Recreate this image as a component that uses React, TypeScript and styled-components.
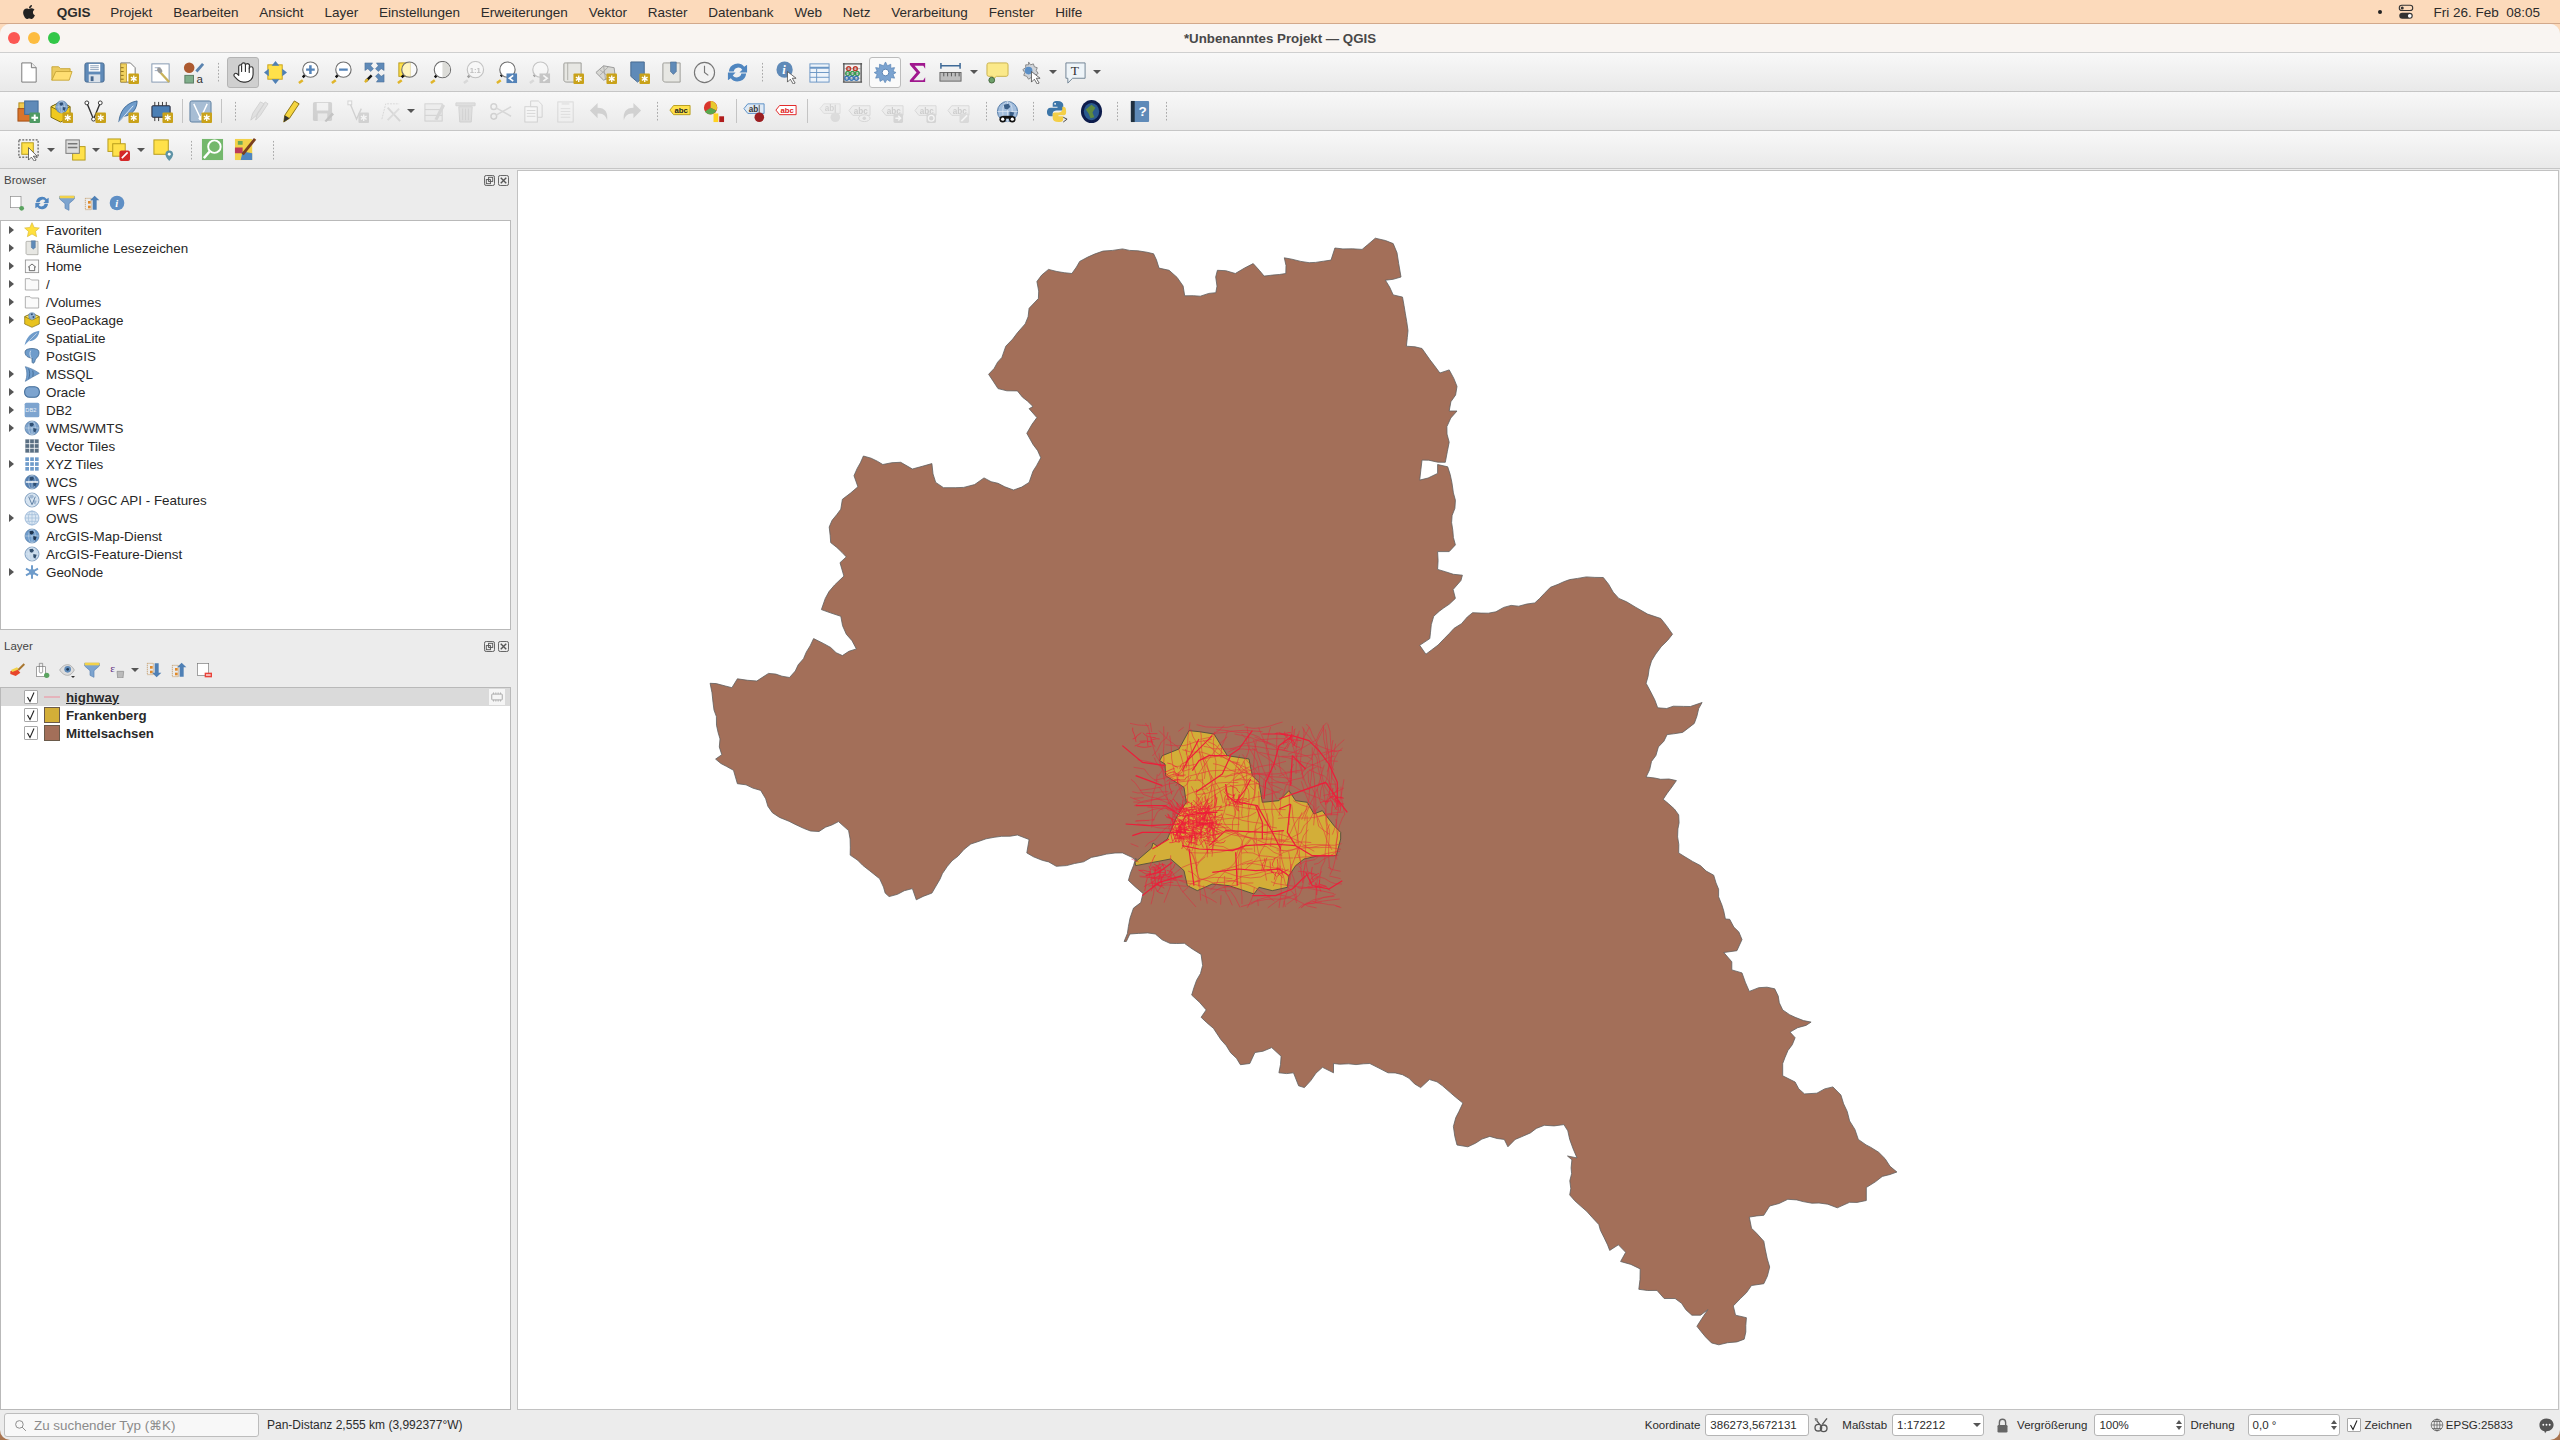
import React, { ReactNode } from 'react';
import styled, { createGlobalStyle } from 'styled-components';
import { FaApple } from 'react-icons/fa';

const GlobalStyle = createGlobalStyle`
  html, body { margin: 0; padding: 0; background: #e2a880; }
  * { box-sizing: border-box; }
  body { font-family: "Liberation Sans", Arial, sans-serif; color: #2b2b2b; }
`;

const Page = styled.div`
  width: 2560px;
  height: 1440px;
  display: flex;
  flex-direction: column;
  overflow: hidden;
  background: linear-gradient(#fcdabb 0 80px, #a9744f 1400px);
`;

const MenuBar = styled.div`
  height: 24px;
  flex: none;
  display: flex;
  align-items: center;
  padding: 1px 0 0 21px;
  gap: 20.8px;
  font-size: 13.5px;
  background: #fcdabb;
  border-bottom: 1px solid #d2a98c;
`;

const AppName = styled.span`
  font-weight: 700;
  margin: 0 -1px 0 -1px;
`;

const MenuRight = styled.div`
  margin-left: auto;
  padding-right: 20px;
  display: flex;
  align-items: center;
  gap: 15px;
`;

const Clock = styled.span`
  white-space: pre;
  margin-left: 3px;
`;

const Dot = styled.span`
  width: 4px;
  height: 4px;
  border-radius: 50%;
  background: #222;
`;

const Win = styled.div`
  flex: 1;
  display: flex;
  flex-direction: column;
  min-height: 0;
  border-radius: 10px;
  overflow: hidden;
  background: #ececec;
`;

const TitleBar = styled.div`
  height: 29px;
  flex: none;
  display: flex;
  align-items: center;
  justify-content: center;
  position: relative;
  background: #f9f5f2;
  border-bottom: 1px solid #cfcfcf;
  font-size: 13.3px;
  font-weight: 700;
  color: #484848;
`;

const Lights = styled.div`
  position: absolute;
  left: 8px;
  top: 8px;
  display: flex;
  gap: 8px;
`;

const Light = styled.span<{ $c: string }>`
  width: 12px;
  height: 12px;
  border-radius: 50%;
  background: ${p => p.$c};
`;

const ToolRow = styled.div<{ $h: number }>`
  height: ${p => p.$h}px;
  flex: none;
  display: flex;
  align-items: center;
  padding-left: 12px;
  background: linear-gradient(#f8f8f8, #e9e9e9);
  border-bottom: 1px solid #c6c6c6;
  position: relative;
`;

const Cell = styled.div<{ $w: number; $mode?: string }>`
  width: ${p => p.$w}px;
  height: 31px;
  flex: none;
  display: flex;
  align-items: center;
  justify-content: center;
  border-radius: 3px;
  ${p => p.$mode === 'pressed' && 'background: #cfcfcf; border: 1px solid #b4b4b4;'}
  ${p => p.$mode === 'white' && 'background: #fafafa; border: 1px solid #bcbcbc;'}
`;

const Caret = styled.span`
  width: 0;
  height: 0;
  border-left: 4px solid transparent;
  border-right: 4px solid transparent;
  border-top: 4px solid #555;
`;

const Grip = styled.span`
  width: 3px;
  height: 20px;
  background-image: radial-gradient(#a9a9a9 0.8px, transparent 1px);
  background-size: 3px 3.4px;
`;

const Sep = styled.span`
  width: 1px;
  height: 24px;
  background: #c4c4c4;
`;

const IconSvg = styled.svg<{ $dim?: boolean }>`
  display: block;
  flex: none;
  ${p => p.$dim && 'filter: grayscale(1) opacity(0.36);'}
`;

const Main = styled.div`
  flex: 1;
  min-height: 0;
  display: flex;
`;

const Side = styled.div`
  width: 517px;
  flex: none;
  display: flex;
  flex-direction: column;
  padding-right: 6px;
`;

const Dock = styled.section<{ $grow?: boolean }>`
  display: flex;
  flex-direction: column;
  ${p => (p.$grow ? 'flex: 1; min-height: 0;' : 'height: 461px; flex: none;')}
`;

const DockHead = styled.div`
  height: 22px;
  flex: none;
  display: flex;
  align-items: center;
  padding: 0 2px 0 4px;
  font-size: 11.5px;
  color: #444;
  justify-content: space-between;
`;

const DockBtns = styled.div`
  display: flex;
  gap: 3px;
`;

const DockTools = styled.div<{ $h: number }>`
  height: ${p => p.$h}px;
  flex: none;
  display: flex;
  align-items: center;
  padding: 0 0 5px 4px;
`;

const ToolSlot = styled.div<{ $w?: number }>`
  width: ${p => p.$w ?? 25}px;
  flex: none;
  display: flex;
  justify-content: center;
`;

const Tree = styled.div`
  flex: 1;
  min-height: 0;
  background: #fff;
  border: 1px solid #b9b9b9;
`;

const TreeRow = styled.div`
  height: 18px;
  display: flex;
  align-items: center;
  font-size: 13.4px;
  color: #262626;
  white-space: nowrap;
`;

const Twist = styled.span<{ $on: boolean }>`
  width: 0;
  height: 0;
  margin-left: 8px;
  margin-right: 10px;
  border-top: 4px solid transparent;
  border-bottom: 4px solid transparent;
  border-left: 5px solid ${p => (p.$on ? '#555' : 'transparent')};
`;

const RowLabel = styled.span`
  margin-left: 6px;
`;

const LayerRow = styled.div<{ $sel?: boolean }>`
  height: 18px;
  display: flex;
  align-items: center;
  padding-left: 23px;
  font-size: 13.3px;
  font-weight: 700;
  color: #2a2a2a;
  position: relative;
  ${p => p.$sel && 'background: #dadada;'}
`;

const Check = styled.span`
  width: 14px;
  height: 14px;
  border: 1px solid #a8a8a8;
  background: #fff;
  border-radius: 1px;
  display: flex;
  align-items: center;
  justify-content: center;
  flex: none;
`;

const Swatch = styled.span<{ $c: string }>`
  width: 16px;
  height: 16px;
  margin-left: 6px;
  background: ${p => p.$c};
  border: 1px solid #6a5a4a;
  flex: none;
`;

const LineSwatch = styled.span`
  width: 16px;
  height: 2px;
  margin: 0 0 0 6px;
  background: #e5b3bb;
  flex: none;
`;

const LayerName = styled.span<{ $u?: boolean }>`
  margin-left: 6px;
  ${p => p.$u && 'text-decoration: underline;'}
`;

const Indicator = styled.span`
  position: absolute;
  right: 5px;
  top: 1px;
  width: 16px;
  height: 16px;
  background: #f5f5f5;
  display: flex;
  align-items: center;
  justify-content: center;
`;

const Splitter = styled.div`
  height: 5px;
  flex: none;
`;

const MapFrame = styled.div`
  flex: 1;
  min-width: 0;
  background: #fff;
  border: 1px solid #c2c2c2;
  margin: 1px 1px 0 0;
  overflow: hidden;
`;

const StatusBar = styled.div`
  height: 30px;
  flex: none;
  display: flex;
  align-items: center;
  padding: 0 5px 0 4px;
  font-size: 11.5px;
  color: #2b2b2b;
`;

const SearchBox = styled.div`
  width: 255px;
  height: 24px;
  display: flex;
  align-items: center;
  gap: 7px;
  padding-left: 9px;
  background: #f8f8f8;
  border: 1px solid #bdbdbd;
  border-radius: 3px;
  font-size: 13.4px;
  color: #8b8b8b;
`;

const PanText = styled.span`
  margin-left: 8px;
  font-size: 12px;
`;

const StatusRight = styled.div`
  margin-left: auto;
  display: flex;
  align-items: center;
`;

const Field = styled.div<{ $w: number; $ml?: number }>`
  width: ${p => p.$w}px;
  height: 22px;
  margin-left: ${p => p.$ml ?? 5}px;
  display: flex;
  align-items: center;
  justify-content: space-between;
  padding: 0 2px 0 4px;
  background: #fff;
  border: 1px solid #b5b5b5;
  border-radius: 3px;
`;

const Label = styled.span<{ $ml?: number }>`
  margin-left: ${p => p.$ml ?? 0}px;
`;

const Spin = styled.span`
  display: flex;
  flex-direction: column;
  gap: 2px;
`;

const SpinUp = styled.span`
  width: 0;
  height: 0;
  border-left: 3px solid transparent;
  border-right: 3px solid transparent;
  border-bottom: 4px solid #555;
`;

const SpinDown = styled(SpinUp)`
  border-bottom: 0;
  border-top: 4px solid #555;
`;

const Slot = styled.span<{ $ml?: number }>`
  display: flex;
  margin-left: ${p => p.$ml ?? 0}px;
`;

/* ---------- icons ---------- */

const badge = (
  <g>
    <rect x="13" y="13" width="11" height="11" rx="1" fill="#c9a21a" />
    <path d="M18.5 15v7M15.5 16.8l6 3.4M21.5 16.8l-6 3.4" stroke="#fff" strokeWidth="1.4" />
  </g>
);

const loupe = (cx: number, cy: number, r: number, fill = '#fff') => (
  <g>
    <line x1={cx - r * 0.7} y1={cy + r * 0.7} x2="6" y2={cy + r + (cx - r - 6)} stroke="#111" strokeWidth="2.6" />
    <line x1="6" y1="20" x2="2" y2="23" stroke="#e0b52a" strokeWidth="2.6" />
    <circle cx={cx} cy={cy} r={r} fill={fill} stroke="#6f6f6f" strokeWidth="1.2" />
  </g>
);

const globe = (fill = '#7ea3cc', land = '#2f4f73') => (
  <g>
    <circle cx="12" cy="12" r="10.5" fill={fill} stroke="#4c75a3" strokeWidth="1" />
    <path d="M1.5 12h21M12 1.5v21" stroke="#dfe9f3" strokeWidth="0.7" />
    <ellipse cx="12" cy="12" rx="5" ry="10.5" fill="none" stroke="#dfe9f3" strokeWidth="0.7" />
    <path d="M8 5l5-1 2 3-3 3-3-1zM14 12l5 1-2 6-3-2z" fill={land} />
  </g>
);

const label = (bg: string, line: string, txt: string, tc: string) => (
  <g>
    <path d="M1 11l4-5h18v10H5z" fill={bg} stroke={line} />
    <text x="6" y="14.5" fontSize="8.5" fontWeight="700" fontFamily="Liberation Sans" fill={tc}>{txt}</text>
  </g>
);

const labelTool = (over: ReactNode) => (
  <g>
    {label('#e6e6e6', '#aaa', 'abc', '#8a8a8a')}
    {over}
  </g>
);

const scroll = (
  <path d="M6 2h15v20H6c-2 0-3-1-3-2V3c0-1 1-1 3-1z" fill="#e7e7e3" stroke="#9a9a94" />
);

const pageBase = <path d="M5 2h10l5 5v15H5z" fill="#fff" stroke="#777" />;

const icons: Record<string, ReactNode> = {
  newdoc: <g>{pageBase}<path d="M15 2v5h5" fill="#eee" stroke="#777" /></g>,
  open: <g><path d="M2 20V6h7l2 2h10v4H6l-4 8z" fill="#eccb5f" stroke="#c9a83c" /><path d="M2 20l4-9h17l-3 9z" fill="#ffdf72" stroke="#c9a83c" /></g>,
  save: <g><rect x="2" y="2" width="20" height="20" rx="2" fill="#5f8ab8" stroke="#46688f" /><rect x="6" y="3" width="12" height="8" fill="#fff" /><path d="M7.5 5h9M7.5 7h9M7.5 9h9" stroke="#8a9fb8" /><rect x="6" y="14" width="12" height="8" fill="#dbe2ea" /><rect x="8" y="16" width="3" height="5" fill="#46688f" /></g>,
  layout: <g>{pageBase}<rect x="5" y="3" width="6" height="19" fill="#f1d260" stroke="#b08a1c" strokeWidth="0.7" /><path d="M5 7h3M5 11h3M5 15h3M5 19h3" stroke="#8a6d15" />{badge}</g>,
  manager: <g><rect x="3" y="3" width="18" height="19" fill="#fff" stroke="#8397b0" /><path d="M6 7h6M6 10h4" stroke="#9fb0c6" /><path d="M11 11l10 11" stroke="#c9b25a" strokeWidth="2.4" /><path d="M9 7a4 4 0 0 0 3 6l2-2a4 4 0 0 0-5-4z" fill="#999" /></g>,
  style: <g><circle cx="7.5" cy="7" r="5.5" fill="#ad5a30" /><path d="M15 11L22 3" stroke="#5b84b0" strokeWidth="3" /><rect x="3" y="15" width="9" height="8" fill="#7fae8a" stroke="#5c7d64" /><text x="15" y="23" fontSize="12" fontFamily="Liberation Sans" fill="#333">a</text></g>,
  hand: <g fill="#fff" stroke="#333" strokeWidth="1.2" strokeLinecap="round" strokeLinejoin="round"><path d="M18 8a2 2 0 1 1 4 0v6a8 8 0 0 1-8 8h-2c-2.8 0-4.5-.86-6-2.34l-3.6-3.6a2 2 0 0 1 2.8-2.8L7 15V6a2 2 0 0 1 3-1.7V4a2 2 0 0 1 4 0 2 2 0 0 1 4 2z" /><path d="M10 5v6M14 4v7M18 8v4" /></g>,
  pansel: <g><rect x="4" y="4" width="15" height="15" fill="#ffe14a" stroke="#c9a21a" /><path d="M12 0l4 5H8zM12 24l-4-5h8zM0 12l5-4v8zM24 12l-5 4V8z" fill="#4f80b5" /></g>,
  zoomin: <g>{loupe(14, 9, 8)}<path d="M14 4.5v9M9.5 9h9" stroke="#5483b8" strokeWidth="2.6" /></g>,
  zoomout: <g>{loupe(14, 9, 8)}<path d="M9.5 9h9" stroke="#5483b8" strokeWidth="2.6" /></g>,
  zoomfull: <g><path d="M2 2h8l-2 3 3 3-3 3-3-3-3 2zM22 2v8l-3-2-3 3-3-3 3-3-2-3zM22 22h-8l2-3-3-3 3-3 3 3 3-2z" fill="#5f8ab8" stroke="#46688f" strokeWidth="0.5" /><path d="M3 21l6-6" stroke="#111" strokeWidth="2.5" /><path d="M2 22l3-3" stroke="#e0b52a" strokeWidth="2.5" /></g>,
  zoomsel: <g><rect x="3" y="2" width="12" height="14" fill="#ffe14a" stroke="#b89a1a" />{loupe(14, 9, 8, 'rgba(255,255,255,.65)')}</g>,
  zoomlayer: <g>{loupe(14, 9, 8.5)}<path d="M14 1a8 8 0 0 1 0 16z" fill="#dcdcd8" /></g>,
  zoom11: <g>{loupe(14, 9, 8.5)}<text x="8" y="12.5" fontSize="8" fontWeight="700" fontFamily="Liberation Sans" fill="#666">1:1</text></g>,
  zoomlast: <g>{loupe(13, 9, 8)}<rect x="12" y="13" width="11" height="10" fill="#5483b8" /><path d="M19 15l-4 3 4 3" fill="none" stroke="#fff" strokeWidth="1.8" /></g>,
  zoomnext: <g>{loupe(13, 9, 8)}<rect x="12" y="13" width="11" height="10" fill="#5483b8" /><path d="M16 15l4 3-4 3" fill="none" stroke="#fff" strokeWidth="1.8" /></g>,
  newmap: <g>{scroll}<path d="M7 2v18" stroke="#b0b0aa" />{badge}</g>,
  map3d: <g><path d="M2 12l8-7 11 2 1 8-12 5z" fill="#d8d8d4" stroke="#999" /><path d="M6 9l11 9M10 5l2 14M15 6l-9 9" stroke="#999" strokeWidth="0.7" />{badge}</g>,
  newbm: <g><path d="M4 1h14v15l-7 6-7-6z" fill="#5f8ab8" stroke="#46688f" />{badge}</g>,
  bookmarks: <g>{scroll}<path d="M11 1h6v10l-3 3-3-3z" fill="#5f8ab8" stroke="#46688f" strokeWidth="0.6" /></g>,
  clock: <g><circle cx="12" cy="12" r="10.5" fill="#f2f2f2" stroke="#777" strokeWidth="1.2" /><path d="M12 5v7l4 3" fill="none" stroke="#777" strokeWidth="1.2" /></g>,
  refresh: <g fill="#4f86c0"><path d="M3 11a9 9 0 0 1 16-5l3-2v8h-8l3-3a5 5 0 0 0-9 2z" /><path d="M21 13a9 9 0 0 1-16 5l-3 2v-8h8l-3 3a5 5 0 0 0 9-2z" /></g>,
  identify: <g><circle cx="10" cy="9" r="8.5" fill="#5f8ab8" /><text x="7.5" y="14" fontSize="13" fontWeight="700" fontStyle="italic" fontFamily="Liberation Serif" fill="#fff">i</text><path d="M13 11l0 11 3-3 3 5 2-1-3-5h4z" fill="#fff" stroke="#444" strokeWidth="0.8" /></g>,
  table: <g><rect x="2" y="3" width="20" height="19" fill="#eef4fa" stroke="#6b96c4" /><path d="M2 7h20" stroke="#6b96c4" strokeWidth="2" /><path d="M2 12h20M2 17h20M9 8v14" stroke="#6b96c4" /></g>,
  abacus: <g><path d="M3 2v20M21 2v20" stroke="#555" strokeWidth="1.4" /><path d="M2 3h20M2 22h20" stroke="#555" strokeWidth="1.4" /><path d="M3 8h18M3 13h18M3 18h18" stroke="#888" strokeWidth="0.7" /><g fill="none" strokeWidth="1.5"><g stroke="#c0392b"><circle cx="8" cy="8" r="2" /><circle cx="15" cy="8" r="2" /></g><g stroke="#3c9a52"><circle cx="7" cy="13" r="2" /><circle cx="12" cy="13" r="2" /><circle cx="17" cy="13" r="2" /></g><g stroke="#3f78b5"><circle cx="6" cy="18" r="2" /><circle cx="11" cy="18" r="2" /><circle cx="16" cy="18" r="2" /></g></g></g>,
  gear: <g><path d="M12 1l2 4 3.5-1.6 0 4.1 4-.6-1.6 3.9 3.1 1.2-3.1 2 1.6 3.9-4-.6-.6 4-3.4-2-1.9 3.4-1.9-3.4-3.4 2-.6-4-4 .6 1.6-3.9-3.1-2 3.1-1.2-1.6-3.9 4 .6 0-4.1L10 5z" fill="#7ba3d0" stroke="#5a84b4" strokeWidth="0.7" /><circle cx="12" cy="12" r="3.5" fill="#fff" stroke="#5a84b4" /></g>,
  sigma: <g><path d="M4 2h16v6l-2-3H9l6 7-7 8h10l2-3v5H4v-2l7-8-7-8z" fill="#a0188e" /></g>,
  measure: <g><path d="M2 5h20M2 2v6M22 2v6" stroke="#3f6a97" strokeWidth="1.6" /><rect x="1" y="12" width="22" height="9" fill="#bdbdbd" stroke="#666" /><path d="M5 12v4M9 12v4M13 12v4M17 12v4M21 12v4" stroke="#555" /></g>,
  note: <g><path d="M3 2h18a2 2 0 0 1 2 2v10a2 2 0 0 1-2 2H11l-4 3v-3H3a2 2 0 0 1-2-2V4a2 2 0 0 1 2-2z" fill="#fbe98a" stroke="#c9b14a" /><circle cx="6" cy="20" r="3" fill="#6ea06a" stroke="#47693f" /></g>,
  gearcur: <g><path d="M10 1l2 3 3-1 1 3 3 1-1 3 2 3-3 2-1 3-3-1-3 2-2-3-3-1 1-3-2-3 3-2 0-3 3 0z" fill="#cfd3d8" stroke="#888" /><circle cx="10" cy="10" r="4" fill="#5b8fc6" /><path d="M13 11l0 11 3-3 3 5 2-1-3-5h4z" fill="#fff" stroke="#444" strokeWidth="0.8" /></g>,
  textnote: <g><path d="M2 2h20v16H9l-5 5v-5H2z" fill="#eef4f8" stroke="#6f8292" /><text x="7" y="15" fontSize="14" fontFamily="Liberation Serif" fill="#333">T</text></g>,
  dsm: <g><rect x="2" y="3" width="13" height="13" fill="#f2c94c" stroke="#b08a1c" /><rect x="1" y="9" width="13" height="13" fill="#d9742b" stroke="#a34e14" /><rect x="8" y="1" width="14" height="14" fill="#5f8ab8" stroke="#3f6a97" /><rect x="13" y="13" width="11" height="11" rx="1" fill="#4f9a63" /><path d="M18.5 15v7M15 18.5h7" stroke="#fff" strokeWidth="2" /></g>,
  gpkg: <g><path d="M1 7l10-5 10 5v11l-10 5-10-5z" fill="#f0c91e" stroke="#7b6a12" /><path d="M1 7l10 5 10-5-10-5z" fill="#ffe45c" stroke="#7b6a12" /><g transform="translate(5,0) scale(.6)">{globe()}</g>{badge}</g>,
  vector: <g><path d="M4 3l7 17 7-17" fill="none" stroke="#333" strokeWidth="1.4" /><circle cx="4" cy="3" r="2" fill="#fff" stroke="#333" /><circle cx="18" cy="3" r="2" fill="#fff" stroke="#333" /><circle cx="11" cy="20" r="2" fill="#fff" stroke="#333" />{badge}</g>,
  feather: <g><path d="M3 23C4 12 10 3 22 1c0 8-5 15-14 16z" fill="#6f9ccb" stroke="#3f6a97" /><path d="M3 23L18 6" stroke="#dfe9f3" />{badge}</g>,
  chip: <g><rect x="2" y="6" width="19" height="12" rx="1" fill="#4b7fb5" stroke="#223" /><path d="M5 6V2M9 6V2M13 6V2M17 6V2M5 22v-4M9 22v-4" stroke="#333" />{badge}</g>,
  virtual: <g><rect x="1" y="1" width="22" height="22" rx="2" fill="#a7bdd4" stroke="#5b7da0" /><path d="M5 4l7 15 7-15" fill="none" stroke="#fff" strokeWidth="1.5" /><circle cx="12" cy="19" r="2" fill="#fff" />{badge}</g>,
  pencils: <g><path d="M5 21l2-7 8-12 4 2-8 12zM10 21l2-7 8-12 3 2-8 12z" fill="#c4c4c4" stroke="#999" /></g>,
  pencil: <g><path d="M5 23l1-7L16 1l5 3-10 15z" fill="#f5d53f" stroke="#8a7212" /><path d="M5 23l1-7 5 3z" fill="#333" /></g>,
  savedit: <g><rect x="2" y="2" width="20" height="20" rx="2" fill="#999" /><rect x="6" y="3" width="12" height="8" fill="#eee" /><rect x="7" y="14" width="10" height="8" fill="#ddd" /><path d="M14 22l8-9 2 2-8 8z" fill="#777" /></g>,
  addvertex: <g><path d="M4 3l7 17 5-11" fill="none" stroke="#999" strokeWidth="1.4" /><rect x="2" y="1" width="4" height="4" fill="#fff" stroke="#999" />{badge}</g>,
  vertextool: <g><path d="M3 20l4-16h14" fill="none" stroke="#aaa" strokeDasharray="2 1" /><path d="M9 8l13 14" stroke="#aaa" strokeWidth="2" /><path d="M21 9L9 21" stroke="#bbb" strokeWidth="2" /></g>,
  tabedit: <g><rect x="2" y="4" width="18" height="18" fill="#e4e4de" stroke="#999" /><path d="M2 10h18M2 16h18" stroke="#999" /><path d="M12 20l8-16 3 2-8 15z" fill="#aaa" /></g>,
  trash: <g><path d="M5 7h14l-1 16H6z" fill="#c8bfba" stroke="#a89c94" /><path d="M2 3h20v3H2z" fill="#c0bab5" stroke="#a89c94" /><path d="M9 9v12M12 9v12M15 9v12" stroke="#a89c94" /></g>,
  scissors: <g><circle cx="5" cy="7" r="3" fill="none" stroke="#999" strokeWidth="1.5" /><circle cx="5" cy="17" r="3" fill="none" stroke="#999" strokeWidth="1.5" /><path d="M7 8l16 9M7 16L23 7" stroke="#aaa" strokeWidth="1.6" /></g>,
  copy: <g><rect x="3" y="7" width="13" height="16" fill="#fff" stroke="#999" /><path d="M9 1h8l4 4v13h-5V7H9z" fill="#f3f3f3" stroke="#999" /><path d="M5 11h9M5 14h9M5 17h9" stroke="#aaa" /></g>,
  paste: <g><rect x="4" y="2" width="16" height="21" fill="#f2f2f2" stroke="#aaa" /><rect x="8" y="1" width="8" height="4" fill="#ccc" /><path d="M7 9h10M7 12h10M7 15h10M7 18h10" stroke="#bbb" /></g>,
  undo: <g><path d="M10 3L2 11l8 8v-5c5 0 8 1 10 7 1-8-2-13-10-13z" fill="#999" /></g>,
  redo: <g><path d="M14 3l8 8-8 8v-5c-5 0-8 1-10 7-1-8 2-13 10-13z" fill="#999" /></g>,
  abc: label('#ffe14a', '#b59a1a', 'abc', '#222'),
  diagram: <g><circle cx="9" cy="8" r="7" fill="#d9362c" /><path d="M9 8V1a7 7 0 0 1 6 10z" fill="#e7c92d" /><path d="M9 8l6 3a7 7 0 0 1-12 1z" fill="#5aa74d" /><rect x="12" y="14" width="5" height="9" fill="#ffd21f" /><rect x="18" y="17" width="5" height="6" fill="#b01d1d" /></g>,
  pinab: <g><path d="M1 9l4-5h17v10H5z" fill="#dfeaf5" stroke="#5b8fc6" /><text x="6" y="12" fontSize="8.5" fontWeight="700" fontFamily="Liberation Sans" fill="#333">ab</text><path d="M17 5v10" stroke="#888" strokeWidth="1.5" /><circle cx="17" cy="18" r="5" fill="#9b1f22" /></g>,
  abcred: label('#fff', '#e01818', 'abc', '#e01818'),
  lab1: <g><path d="M1 9l4-5h17v10H5z" fill="#e6e6e6" stroke="#bbb" /><text x="6" y="12" fontSize="8.5" fontWeight="700" fontFamily="Liberation Sans" fill="#999">ab</text><path d="M17 5v10" stroke="#aaa" strokeWidth="1.5" /><circle cx="17" cy="18" r="5" fill="#bbb" /></g>,
  lab2: labelTool(<g><ellipse cx="17" cy="19" rx="6" ry="3.5" fill="#eee" stroke="#aaa" /><circle cx="17" cy="19" r="1.8" fill="#aaa" /></g>),
  lab3: labelTool(<g><rect x="13" y="14" width="10" height="10" rx="1.5" fill="#aaa" /><path d="M15 19h5M18 16.5l2.5 2.5-2.5 2.5" fill="none" stroke="#fff" strokeWidth="1.5" /></g>),
  lab4: labelTool(<g><rect x="13" y="14" width="10" height="10" rx="1.5" fill="#aaa" /><circle cx="18" cy="19" r="3" fill="none" stroke="#fff" strokeWidth="1.4" /></g>),
  lab5: labelTool(<g><rect x="13" y="14" width="10" height="10" rx="1.5" fill="#b8b8b0" /><path d="M15 22l6-6" stroke="#fff" strokeWidth="1.6" /></g>),
  binoculars: <g>{globe('#a3bedd', '#3b5f88')}<circle cx="7" cy="20" r="3.4" fill="#111" /><circle cx="17" cy="20" r="3.4" fill="#111" /><rect x="7" y="16.5" width="10" height="3" fill="#111" /><circle cx="7" cy="20" r="1.7" fill="#fff" /><circle cx="17" cy="20" r="1.7" fill="#fff" /></g>,
  python: <g><path d="M12 1c-5 0-5 2-5 4v2h5v1H5c-3 0-4 2-4 4.5S2 17 5 17h2v-3c0-2 2-3 4-3h4c2 0 3-1 3-3V5c0-2-2-4-6-4z" fill="#3d76a8" /><path d="M13 23c5 0 5-2 5-4v-2h-5v-1h5c3 0 3-2 3-4s0-5-3-5h-1v3c0 2-2 3-4 3H9c-2 0-2 1-2 3v3c0 2 2 4 6 4z" fill="#f4cf47" /><circle cx="9.5" cy="4" r="1" fill="#fff" /><path d="M18 18l4 2-4 3" fill="none" stroke="#444" /></g>,
  earth: <g><ellipse cx="12" cy="12" rx="11" ry="12" fill="#0d1c4b" /><ellipse cx="12" cy="12" rx="8" ry="9" fill="#2a5a8f" /><path d="M6 10l6-5 4 3-3 5 2 5-4 1-2-5z" fill="#5f8a3f" /></g>,
  help: <g><rect x="3" y="1" width="19" height="22" rx="1" fill="#5f8ab8" /><rect x="3" y="1" width="4" height="22" fill="#20303f" /><text x="11" y="17" fontSize="14" fontWeight="700" fontFamily="Liberation Sans" fill="#fff">?</text></g>,
  select: <g><rect x="2" y="2" width="20" height="18" fill="none" stroke="#333" strokeDasharray="2 1.5" /><rect x="5" y="5" width="12" height="12" fill="#ffe14a" stroke="#b59a1a" /><path d="M12 10v13l3-3 3 4 2-1-3-4h4z" fill="#fff" stroke="#444" strokeWidth="0.8" /></g>,
  seltable: <g><rect x="9" y="9" width="13" height="14" fill="#ffe14a" stroke="#b59a1a" /><rect x="2" y="2" width="14" height="14" fill="#ddd" stroke="#777" /><path d="M4 6h10M4 10h10" stroke="#777" strokeWidth="1.5" /></g>,
  deselect: <g><rect x="1" y="1" width="13" height="13" fill="#ffe14a" stroke="#b59a1a" /><rect x="6" y="6" width="13" height="13" fill="#ffe14a" stroke="#b59a1a" /><rect x="13" y="13" width="11" height="11" rx="2" fill="#d42828" /><path d="M15.5 21l6-6" stroke="#fff" strokeWidth="1.8" /></g>,
  selloc: <g><rect x="2" y="2" width="15" height="15" fill="#ffe14a" stroke="#b59a1a" /><path d="M18 13a4 4 0 0 1 4 4c0 3-4 7-4 7s-4-4-4-7a4 4 0 0 1 4-4z" fill="#5e93a6" /><circle cx="18" cy="17" r="1.5" fill="#fff" /></g>,
  osm: <g><rect x="1" y="1" width="22" height="22" fill="#74b86c" /><circle cx="14" cy="9" r="6.5" fill="none" stroke="#fff" strokeWidth="2" /><path d="M9 14l-6 7" stroke="#fff" strokeWidth="2.5" /></g>,
  art: <g><rect x="1" y="1" width="18" height="22" fill="#f2d24a" /><path d="M1 10h8v6H1z" fill="#bb3c5a" /><path d="M9 14l10 2v7H7z" fill="#4f86c0" /><path d="M4 3h5v4H4z" fill="#6ca85a" /><path d="M9 17L22 1" stroke="#7a3f1f" strokeWidth="3" /></g>,
  star: <path d="M12 1l3.2 7.2 7.8.8-5.8 5.2 1.7 7.8L12 18l-6.9 4 1.7-7.8L1 9l7.8-.8z" fill="#ffe03d" stroke="#d9b93a" />,
  folder: <path d="M2 4h7l2 2h11v15H2z" fill="#fafafa" stroke="#9c9c9c" strokeWidth="1.2" />,
  home: <g><rect x="2" y="3" width="20" height="19" fill="#fafafa" stroke="#8c8c8c" strokeWidth="1.2" /><path d="M6 14l6-5 6 5M8 13v6h8v-6" fill="none" stroke="#555" strokeWidth="1.3" /></g>,
  box: <g><path d="M1 7l11-5 11 5v11l-11 5-11-5z" fill="#e8c31f" stroke="#7b6a12" /><path d="M1 7l11 5 11-5-11-5z" fill="#ffe45c" stroke="#7b6a12" /><g transform="translate(6,0) scale(.5)">{globe()}</g></g>,
  quill: <g><path d="M1 23C3 12 10 3 23 1c0 8-6 15-16 16z" fill="#6f9ccb" /><path d="M1 23L19 5" stroke="#dfe9f3" /></g>,
  pg: <g><path d="M3 3c4-3 14-3 18 0 3 3 1 10-2 12-2 1-2 3-3 6-2 3-4 2-4-1v-5c-3 0-7-1-9-4S1 5 3 3z" fill="#6f9ccb" stroke="#2f5880" /><path d="M10 4c-2 4-1 8 1 11" fill="none" stroke="#fff" /></g>,
  mssql: <g><path d="M2 1c7 2 14 5 21 10-6 3-13 7-21 12 3-7 3-15 0-22z" fill="#6f9ccb" stroke="#4c75a3" /><path d="M7 4c2 5 2 10 0 15M13 7c1 3 1 6 0 9" fill="none" stroke="#34587d" /></g>,
  oracle: <rect x="1" y="4" width="22" height="16" rx="7" fill="#7da4cf" stroke="#3f6a97" strokeWidth="1.6" />,
  db2: <g><rect x="1" y="1" width="22" height="22" rx="2.5" fill="#7da4cf" /><text x="2" y="15" fontSize="8.5" fontFamily="Liberation Sans" fill="#eaf1f8">DB2</text></g>,
  globe: globe(),
  grid: <g fill="#5a6f83"><path d="M2 2h20v20H2z" /><path d="M8.5 2v20M15.5 2v20M2 8.5h20M2 15.5h20" stroke="#fff" strokeWidth="1.2" /></g>,
  xyz: <g fill="#6f9ccb"><rect x="2" y="2" width="5.5" height="5.5" /><rect x="9.3" y="2" width="5.5" height="5.5" /><rect x="16.5" y="2" width="5.5" height="5.5" /><rect x="2" y="9.3" width="5.5" height="5.5" /><rect x="9.3" y="9.3" width="5.5" height="5.5" /><rect x="16.5" y="9.3" width="5.5" height="5.5" /><rect x="2" y="16.5" width="5.5" height="5.5" /><rect x="9.3" y="16.5" width="5.5" height="5.5" /><rect x="16.5" y="16.5" width="5.5" height="5.5" /></g>,
  wcs: <g>{globe('#557fb0', '#2f4f73')}<path d="M3 12h18" stroke="#fff" strokeWidth="2" /></g>,
  wfs: <g>{globe('#d4e2f0', '#9fb7d1')}<path d="M7 7l5 12 5-12" fill="none" stroke="#5b7da0" strokeWidth="1.4" /></g>,
  ows: <g><circle cx="12" cy="12" r="10.5" fill="#dbe7f3" stroke="#7ea3cc" /><path d="M1.5 12h21M3 7h18M3 17h18M12 1.5v21" stroke="#9fbbd8" /><ellipse cx="12" cy="12" rx="5.5" ry="10.5" fill="none" stroke="#9fbbd8" /></g>,
  arc: globe('#6f9ccb', '#1f3550'),
  arc2: globe('#c6d8ea', '#33506e'),
  geonode: <g stroke="#6f9ccb" strokeWidth="3" fill="#6f9ccb"><path d="M12 2v20M3 7l18 10M21 7L3 17" /><circle cx="12" cy="12" r="3" /></g>,
  dockNew: <g><rect x="2" y="2" width="16" height="17" fill="#fff" stroke="#888" /><circle cx="19" cy="20" r="3.5" fill="#5aa35f" /></g>,
  funnel: <g><path d="M1 2h22v4l-8 7v10l-6-3v-7L1 6z" fill="#7da4cf" stroke="#5a84b4" /><path d="M1 1h22v4H1z" fill="#f2d24a" /></g>,
  collapse: <g><rect x="2" y="5" width="9" height="17" fill="none" stroke="#b98a4a" strokeDasharray="2 1" /><rect x="6" y="9" width="4" height="4" fill="#e08a2a" /><rect x="6" y="16" width="4" height="4" fill="#e08a2a" /><path d="M16 1l7 7h-4v14h-6V8h-4z" fill="#4f80b5" /></g>,
  expand: <g><rect x="2" y="2" width="9" height="17" fill="none" stroke="#b98a4a" strokeDasharray="2 1" /><rect x="6" y="6" width="4" height="4" fill="#e08a2a" /><rect x="6" y="13" width="4" height="4" fill="#e08a2a" /><path d="M16 23l7-7h-4V2h-6v14h-4z" fill="#4f80b5" /></g>,
  info: <g><circle cx="12" cy="12" r="11" fill="#5f8fc5" /><text x="9.5" y="18" fontSize="16" fontWeight="700" fontStyle="italic" fontFamily="Liberation Serif" fill="#fff">i</text></g>,
  brush: <g><path d="M2 14l10-4 5 6-7 5-8-3z" fill="#e8462b" /><path d="M3 12l9-4 3 3-10 4z" fill="#f2d24a" /><path d="M14 12l9-9" stroke="#a8762f" strokeWidth="3" /></g>,
  addgroup: <g><rect x="4" y="7" width="13" height="15" fill="#fff" stroke="#777" /><path d="M8 7V2h5v13c0 2-5 2-5 0V6" fill="none" stroke="#777" /><circle cx="19" cy="20" r="4" fill="#5aa35f" /></g>,
  eye: <g><path d="M1 12C5 6 9 4 13 4s7 3 10 8c-3 5-6 8-10 8S5 18 1 12z" fill="#ddd" stroke="#999" /><circle cx="13" cy="11" r="5" fill="#5f8ab8" /><circle cx="13" cy="11" r="2" fill="#1e3550" /><path d="M18 21h6l-3 3z" fill="#333" /></g>,
  epsilon: <g><text x="2" y="15" fontSize="17" fontFamily="Liberation Serif" fill="#5c2b7e">ε</text><path d="M12 14h10l-1 10h-8z" fill="#bbb" stroke="#888" /></g>,
  remove: <g><rect x="2" y="2" width="17" height="18" fill="#fff" stroke="#777" /><rect x="13" y="16" width="11" height="7" fill="#e9423a" /><path d="M15 19.5h7" stroke="#fff" strokeWidth="1.8" /></g>,
  chipgrey: <g><rect x="3" y="7" width="18" height="10" rx="1" fill="none" stroke="#9a9a9a" strokeWidth="1.4" /><path d="M6 7V4M10 7V4M14 7V4M18 7V4M6 20v-3M10 20v-3M14 20v-3M18 20v-3" stroke="#9a9a9a" /></g>,
  crs: <g fill="none" stroke="#555" strokeWidth="1.2"><circle cx="12" cy="12" r="10" /><path d="M2 12h20M12 2v20" /><ellipse cx="12" cy="12" rx="5" ry="10" /><path d="M4 6h16M4 18h16" /></g>,
  tracker: <g><path d="M3 2l7 9M21 2l-7 9" stroke="#555" strokeWidth="2" /><circle cx="8" cy="16" r="5" fill="none" stroke="#555" strokeWidth="2" /><circle cx="16" cy="17" r="5" fill="none" stroke="#555" strokeWidth="2" /><circle cx="5" cy="4" r="2.2" fill="#888" /></g>,
  bubble: <g><path d="M12 2c6 0 10 4 10 9s-4 9-10 9l-2 3-1-3c-5-1-7-4-7-9 0-5 4-9 10-9z" fill="#555" /><circle cx="7.5" cy="11" r="1.3" fill="#fff" /><circle cx="12" cy="11" r="1.3" fill="#fff" /><circle cx="16.5" cy="11" r="1.3" fill="#fff" /></g>,
  lock: <g><path d="M7 11V7a5 5 0 0 1 10 0v4" fill="none" stroke="#666" strokeWidth="2.2" /><rect x="4" y="11" width="16" height="12" rx="2" fill="#666" /></g>,
  toggles: <g><rect x="3" y="3" width="18" height="7" rx="3.5" fill="none" stroke="#333" strokeWidth="1.4" /><circle cx="7" cy="6.5" r="2" fill="#333" /><rect x="3" y="13" width="18" height="8" rx="4" fill="#333" /><circle cx="17" cy="17" r="2.5" fill="#fff" /></g>,
  search: <g fill="none" stroke="#8b8b8b" strokeWidth="1.8"><circle cx="10" cy="10" r="7" /><path d="M15 15l7 7" /></g>,
  tick: <path d="M5 12l5 9L18 3" fill="none" stroke="#222" strokeWidth="2.2" />,
  dockfloat: <g fill="none" stroke="#555" strokeWidth="2"><rect x="1" y="1" width="22" height="22" rx="4" /><rect x="10" y="5" width="9" height="9" /><rect x="5" y="10" width="9" height="9" /></g>,
  dockclose: <g fill="none" stroke="#555" strokeWidth="2"><rect x="1" y="1" width="22" height="22" rx="4" /><path d="M6 6l12 12M18 6L6 18" strokeWidth="3" /></g>,
};

const Icon = ({ n, s = 24, dim }: { n: string; s?: number; dim?: boolean }) => (
  <IconSvg width={s} height={s} viewBox="0 0 24 24" $dim={dim}>
    {icons[n]}
  </IconSvg>
);

/* ---------- toolbars ---------- */

type Tool = { n?: string; w?: number; k?: 'arrow' | 'sep' | 'grip'; dim?: boolean; mode?: string };

const row1: Tool[] = [
  { n: 'newdoc' }, { n: 'open' }, { n: 'save' }, { n: 'layout' }, { n: 'manager' }, { n: 'style' },
  { k: 'grip', w: 17 },
  { n: 'hand', w: 32, mode: 'pressed' }, { n: 'pansel' }, { n: 'zoomin' }, { n: 'zoomout' }, { n: 'zoomfull' },
  { n: 'zoomsel' }, { n: 'zoomlayer' }, { n: 'zoom11', dim: true }, { n: 'zoomlast' }, { n: 'zoomnext', dim: true },
  { n: 'newmap' }, { n: 'map3d' }, { n: 'newbm' }, { n: 'bookmarks' }, { n: 'clock' }, { n: 'refresh' },
  { k: 'grip', w: 16 },
  { n: 'identify' }, { n: 'table' }, { n: 'abacus' }, { n: 'gear', w: 32, mode: 'white' }, { n: 'sigma' }, { n: 'measure' },
  { k: 'arrow', w: 14 }, { n: 'note' }, { n: 'gearcur' }, { k: 'arrow', w: 12 }, { n: 'textnote' }, { k: 'arrow', w: 10 },
];

const row2: Tool[] = [
  { n: 'dsm' }, { n: 'gpkg' }, { n: 'vector' }, { n: 'feather', w: 32 }, { n: 'chip', w: 36 },
  { k: 'sep', w: 6 }, { n: 'virtual', w: 30 }, { k: 'sep', w: 12 }, { k: 'grip', w: 16 },
  { n: 'pencils', w: 28, dim: true }, { n: 'pencil', w: 38 }, { n: 'savedit', w: 26, dim: true },
  { n: 'addvertex', w: 44, dim: true }, { n: 'vertextool', w: 22, dim: true }, { k: 'arrow', w: 20 },
  { n: 'tabedit', w: 26, dim: true }, { n: 'trash', w: 36, dim: true }, { n: 'scissors', w: 34, dim: true },
  { n: 'copy', w: 32, dim: true }, { n: 'paste', w: 32, dim: true }, { n: 'undo', w: 36, dim: true },
  { n: 'redo', w: 28, dim: true }, { k: 'grip', w: 24 },
  { n: 'abc', w: 22 }, { n: 'diagram', w: 44 }, { k: 'sep', w: 2 }, { n: 'pinab', w: 34 }, { n: 'abcred', w: 30 },
  { k: 'sep', w: 12 }, { n: 'lab1', w: 34, dim: true }, { n: 'lab2', w: 24, dim: true }, { n: 'lab3', w: 42, dim: true },
  { n: 'lab4', w: 24, dim: true }, { n: 'lab5', w: 42, dim: true }, { k: 'grip', w: 14 }, { n: 'binoculars', w: 28 },
  { k: 'grip', w: 24 }, { n: 'python', w: 24 }, { n: 'earth', w: 44 }, { k: 'grip', w: 8 }, { n: 'help', w: 36 }, { k: 'grip', w: 18 },
];

const row3: Tool[] = [
  { n: 'select' }, { k: 'arrow', w: 12 }, { n: 'seltable', w: 36 }, { k: 'arrow', w: 6 }, { n: 'deselect', w: 38 },
  { k: 'arrow', w: 8 }, { n: 'selloc', w: 36 }, { k: 'grip', w: 20 }, { n: 'osm', w: 22 }, { n: 'art', w: 44 }, { k: 'grip', w: 12 },
];

const ToolStrip = ({ items, h }: { items: Tool[]; h: number }) => (
  <ToolRow $h={h}>
    {items.map((t, i) => (
      <Cell key={i} $w={t.w ?? 33} $mode={t.mode}>
        {t.k === 'arrow' && <Caret />}
        {t.k === 'sep' && <Sep />}
        {t.k === 'grip' && <Grip />}
        {t.n && <Icon n={t.n} dim={t.dim} s={t.n === 'abc' || t.n === 'abcred' ? 22 : 23} />}
      </Cell>
    ))}
  </ToolRow>
);

/* ---------- map ---------- */

const north: number[][] = [
  [40,1040],[68,1050],[75,1030],[100,1035],[115,1018],[142,1027],[160,985],[173,940],[195,960],[210,978],[228,963],[215,930],[208,890],[183,875],[188,850],[200,820],[212,800],[207,770],[215,757],[195,725],[193,690],[208,650],[210,628],[230,600],[225,575],[237,531],[262,550],[285,545],[300,560],[325,548],[330,590],[340,602],[355,602],[380,595],[392,580],[410,592],[430,607],[450,590],[455,565],[465,535],[455,505],[447,480],[460,445],[450,425],[455,420],[435,385],[410,380],[398,348],[415,310],[420,285],[435,255],[445,235],[450,200],[462,178],[460,140],[475,113],[505,122],[515,95],[545,72],[570,67],[610,78],[617,110],[630,115],[648,150],[650,172],[670,173],[690,165],[692,115],[715,122],[738,100],[752,128],[780,122],[778,87],[810,98],[838,92],[843,65],[878,68],[895,43],[918,55],[925,100],[928,130],[908,137],[918,170],[930,175],[937,250],[935,285],[955,290],[965,315],[978,345],[990,338],[1000,375],[990,430],[1000,430],[987,465],[990,500],[985,545],[955,540],[952,585],[975,570],[975,550],[988,555],[998,630],[993,680],[998,730],[990,745],[975,745],[975,785],[1007,798],[1005,810],[995,830],[998,850],[970,890],[965,940],[952,955],[960,975],[1020,882],[1050,880],[1060,870],[1100,860],[1120,825],[1155,805],[1188,803],[1208,850],[1230,870],[1245,885],[1262,895],[1277,930],[1250,990],[1243,1040],[1258,1095],[1300,1092],[1315,1083],[1305,1130],[1290,1150],[1270,1155],[1250,1215],[1243,1250],[1282,1258],[1265,1300],[1285,1335],[1285,1420],[1330,1470],[1345,1568],
].map(([x, y]) => [680 + x * 0.778, 220 + y * 0.4464]);

const south: number[][] = [
  [895,325],[912,380],[905,410],[887,415],[898,440],[898,462],[912,470],[922,520],[935,510],[957,513],[968,570],[985,590],[1007,603],[1000,612],[978,630],[985,645],[968,715],[968,748],[985,765],[998,797],[1015,795],[1037,778],[1048,800],[1060,870],[1072,920],[1100,955],[1125,1008],[1105,1020],[1083,1050],[1083,1085],[1060,1090],[1043,1105],[1030,1095],[975,1082],[950,1100],[942,1125],[922,1130],[925,1160],[942,1195],[950,1265],[942,1310],[925,1315],[900,1370],[903,1395],[918,1402],[915,1460],[880,1475],[870,1470],[850,1425],[865,1380],[855,1395],[843,1395],[820,1350],[805,1350],[795,1328],[770,1325],[772,1270],[745,1250],[752,1225],[742,1205],[730,1220],[715,1150],[690,1100],[675,1070],[678,975],[672,965],[685,970],[675,920],[667,880],[640,882],[600,920],[590,940],[585,920],[565,912],[535,940],[520,935],[515,885],[528,822],[500,775],[482,758],[470,780],[445,745],[425,740],[400,715],[350,715],[350,740],[335,725],[310,780],[302,775],[295,740],[275,740],[278,695],[265,672],[242,685],[235,715],[222,718],[195,650],[185,620],[168,590],[175,570],[155,530],[158,510],[170,450],[168,420],[145,390],[125,390],[105,365],[70,365],[65,385],[62,385],[68,345],[75,295],[85,280],[88,255],[68,220],[75,180],[78,160],
].map(([x, y]) => [1080 + x * 0.727, 800 + y * 0.37]);

const west: number[][] = [
  [590,1440],[570,1420],[530,1430],[520,1440],[485,1450],[447,1420],[450,1390],[435,1380],[405,1385],[375,1400],[345,1450],[325,1510],[305,1525],[300,1500],[270,1518],[265,1510],[258,1478],[245,1460],[220,1425],[218,1370],[205,1350],[180,1372],[160,1365],[120,1330],[105,1280],[75,1265],[70,1235],[47,1210],[55,1200],[45,1100],
].map(([x, y]) => [680 + x * 0.778, 220 + y * 0.4464]);

const toPath = (pts: number[][]) =>
  'M' + pts.map(([x, y]) => `${x.toFixed(1)} ${y.toFixed(1)}`).join('L') + 'Z';

// simple seeded noise so the border and the thin road web stay the same on every render
const makeRng = (seed: number) => () => {
  seed = (seed * 16807) % 2147483647;
  return seed / 2147483647;
};

// long border segments get small kinks, the real outline is never straight
const roughen = (pts: number[][]) => {
  const rnd = makeRng(99);
  const out: number[][] = [];
  pts.forEach(([x, y], i) => {
    const [nx, ny] = pts[(i + 1) % pts.length];
    const parts = Math.floor(Math.hypot(nx - x, ny - y) / 7);
    out.push([x, y]);
    for (let k = 1; k < parts; k++) {
      out.push([
        x + ((nx - x) * k) / parts + (rnd() - 0.5) * 2.4,
        y + ((ny - y) * k) / parts + (rnd() - 0.5) * 2.4,
      ]);
    }
  });
  return out;
};

const districtPath = toPath(roughen([...north, ...south, ...west]));

const townPath = toPath([
  [108,490],[158,447],[162,432],[175,442],[205,420],[235,350],[262,310],[255,265],[200,230],[198,195],[182,185],[190,170],[240,150],[270,95],[300,98],[345,105],[385,170],[450,180],[460,230],[480,250],[490,310],[540,305],[570,275],[590,305],[625,310],[645,345],[670,335],[705,380],[725,400],[725,420],[712,470],[660,470],[615,480],[590,500],[570,530],[565,565],[520,575],[480,565],[465,585],[420,570],[390,560],[340,555],[295,575],[265,560],[255,515],[215,480],[110,500],
]);

const mainRoads = [
  '280,215 300,185 330,170 385,170', '580,110 540,140 525,195 500,250 495,300',
  '580,110 630,125 660,155 690,195 715,250 715,300 745,340', '490,105 540,105 580,110',
  '380,255 385,290 410,310 440,270 455,240', '230,410 260,350 320,340 355,340', '210,420 160,450',
  '575,315 565,400 590,440 640,470 705,470', '250,440 300,450 400,455 440,440 520,435 590,440',
  '330,440 380,395 500,400 555,395', '340,520 420,510 470,515 540,510 570,530', '245,350 200,320 110,320',
  '240,375 150,380 80,375', '260,400 130,400 100,410', '110,230 190,260', '70,140 130,190 200,200',
  '390,170 420,150 460,95', '715,300 680,250 610,275 540,300', '140,530 180,520 220,490',
  '130,590 180,550 250,530', '620,520 640,560 690,570 730,545', '460,590 530,590 580,570 620,530',
  '250,215 300,120', '340,110 260,190', '470,320 490,370 490,420', '410,460 415,560', '270,450 285,560',
  '290,280 370,225 395,170', '575,315 540,330', '420,310 475,320 520,400 545,450', '620,210 580,170 575,260',
];

// the road extract was cut to a box around the town, and it stops at the white notch
const inExtract = (x: number, y: number) =>
  x > 88 && x < 738 && y > 68 && y < 628 && !(x < 118 && y > 490);

const wander = (rnd: () => number, x: number, y: number, parts: number, len: number, turn: number) => {
  // roads mostly run along the axes of the extract
  let a = Math.floor(rnd() * 4) * (Math.PI / 2) + (rnd() - 0.5) * 0.8;
  const out = [`${x.toFixed(0)},${y.toFixed(0)}`];
  for (let i = 0; i < parts; i++) {
    a += (rnd() - 0.5) * turn;
    x += Math.cos(a) * len * (0.5 + rnd());
    y += Math.sin(a) * len * (0.5 + rnd());
    if (!inExtract(x, y)) break;
    out.push(`${x.toFixed(0)},${y.toFixed(0)}`);
  }
  return out.join(' ');
};

const buildWeb = () => {
  const rnd = makeRng(4711);
  const thin: string[] = [];
  for (let i = 0; i < 230; i++) {
    thin.push(wander(rnd, 95 + rnd() * 635, 72 + rnd() * 550, 7, 24, 0.5));
  }
  const clusters: [number, number, number, number][] = [
    [285, 378, 64, 210], [175, 530, 34, 36], [705, 300, 14, 16], [635, 545, 26, 14], [580, 112, 16, 14],
    [240, 225, 28, 14], [400, 300, 24, 14], [140, 130, 36, 10], [510, 515, 28, 10],
  ];
  const dense: string[] = [];
  clusters.forEach(([cx, cy, r, count]) => {
    for (let i = 0; i < count; i++) {
      dense.push(wander(rnd, cx + (rnd() - 0.5) * r * 2, cy + (rnd() - 0.5) * r * 1.7, 4, 9, 1));
    }
  });
  return { thin, dense };
};

const web = buildWeb();

const MapView = () => (
  <svg width="2040" height="1238" viewBox="519 172 2040 1238" style={{ display: 'block' }}>
    <path d={districtPath} fill="#a36f59" stroke="#5f5f5f" strokeWidth="0.8" />
    <g transform="translate(1100,700) scale(0.3333)" fill="none" strokeLinejoin="round">
      <path d={townPath} fill="#d3ae38" stroke="#4d4d3c" strokeWidth="2.6" />
      <g stroke="#ea1f3d" strokeWidth="1.7" opacity="0.85">
        {web.thin.map((p, i) => <polyline key={i} points={p} />)}
      </g>
      <g stroke="#ee1c3a" strokeWidth="2">
        {web.dense.map((p, i) => <polyline key={i} points={p} />)}
      </g>
      <g stroke="#ee1c3a" strokeWidth="3.6">
        {mainRoads.map((p, i) => <polyline key={i} points={p} />)}
      </g>
    </g>
  </svg>
);

/* ---------- panels ---------- */

const browserRows: [string, string, boolean][] = [
  ['star', 'Favoriten', true], ['bookmarks', 'Räumliche Lesezeichen', true], ['home', 'Home', true], ['folder', '/', true],
  ['folder', '/Volumes', true], ['box', 'GeoPackage', true], ['quill', 'SpatiaLite', false], ['pg', 'PostGIS', false],
  ['mssql', 'MSSQL', true], ['oracle', 'Oracle', true], ['db2', 'DB2', true], ['globe', 'WMS/WMTS', true],
  ['grid', 'Vector Tiles', false], ['xyz', 'XYZ Tiles', true], ['wcs', 'WCS', false], ['wfs', 'WFS / OGC API - Features', false],
  ['ows', 'OWS', true], ['arc', 'ArcGIS-Map-Dienst', false], ['arc2', 'ArcGIS-Feature-Dienst', false], ['geonode', 'GeoNode', true],
];

const menus = ['Projekt', 'Bearbeiten', 'Ansicht', 'Layer', 'Einstellungen', 'Erweiterungen', 'Vektor', 'Raster', 'Datenbank', 'Web', 'Netz', 'Verarbeitung', 'Fenster', 'Hilfe'];

const DockTitle = ({ text }: { text: string }) => (
  <DockHead>
    {text}
    <DockBtns>
      <Icon n="dockfloat" s={11} />
      <Icon n="dockclose" s={11} />
    </DockBtns>
  </DockHead>
);

export default function App() {
  return (
    <Page>
      <GlobalStyle />
      <MenuBar>
        <FaApple size={16} color="#222" />
        <AppName>QGIS</AppName>
        {menus.map(m => <span key={m}>{m}</span>)}
        <MenuRight>
          <Dot />
          <Icon n="toggles" s={18} />
          <Clock>Fri 26. Feb  08:05</Clock>
        </MenuRight>
      </MenuBar>
      <Win>
        <TitleBar>
          <Lights>
            <Light $c="#fc5753" />
            <Light $c="#fdbc40" />
            <Light $c="#33c748" />
          </Lights>
          *Unbenanntes Projekt — QGIS
        </TitleBar>
        <ToolStrip items={row1} h={39} />
        <ToolStrip items={row2} h={39} />
        <ToolStrip items={row3} h={38} />
        <Main>
          <Side>
            <Dock>
              <DockTitle text="Browser" />
              <DockTools $h={29}>
                {['dockNew', 'refresh', 'funnel', 'collapse', 'info'].map(n => (
                  <ToolSlot key={n}><Icon n={n} s={16} /></ToolSlot>
                ))}
              </DockTools>
              <Tree>
                {browserRows.map(([icon, text, more]) => (
                  <TreeRow key={text}>
                    <Twist $on={more} />
                    <Icon n={icon} s={16} />
                    <RowLabel>{text}</RowLabel>
                  </TreeRow>
                ))}
              </Tree>
            </Dock>
            <Splitter />
            <Dock $grow>
              <DockTitle text="Layer" />
              <DockTools $h={30}>
                {['brush', 'addgroup', 'eye', 'funnel', 'epsilon'].map(n => (
                  <ToolSlot key={n}><Icon n={n} s={16} /></ToolSlot>
                ))}
                <ToolSlot $w={12}><Caret /></ToolSlot>
                {['expand', 'collapse', 'remove'].map(n => (
                  <ToolSlot key={n}><Icon n={n} s={16} /></ToolSlot>
                ))}
              </DockTools>
              <Tree>
                <LayerRow $sel>
                  <Check><Icon n="tick" s={12} /></Check>
                  <LineSwatch />
                  <LayerName $u>highway</LayerName>
                  <Indicator><Icon n="chipgrey" s={14} /></Indicator>
                </LayerRow>
                <LayerRow>
                  <Check><Icon n="tick" s={12} /></Check>
                  <Swatch $c="#d3ae38" />
                  <LayerName>Frankenberg</LayerName>
                </LayerRow>
                <LayerRow>
                  <Check><Icon n="tick" s={12} /></Check>
                  <Swatch $c="#a36f59" />
                  <LayerName>Mittelsachsen</LayerName>
                </LayerRow>
              </Tree>
            </Dock>
          </Side>
          <MapFrame>
            <MapView />
          </MapFrame>
        </Main>
        <StatusBar>
          <SearchBox>
            <Icon n="search" s={13} />
            Zu suchender Typ (⌘K)
          </SearchBox>
          <PanText>Pan-Distanz 2,555 km (3,992377°W)</PanText>
          <StatusRight>
            <Label>Koordinate</Label>
            <Field $w={104} $ml={5}>386273,5672131</Field>
            <Slot $ml={4}><Icon n="tracker" s={16} /></Slot>
            <Label $ml={13}>Maßstab</Label>
            <Field $w={92}>1:172212<Caret /></Field>
            <Slot $ml={11}><Icon n="lock" s={15} /></Slot>
            <Label $ml={7}>Vergrößerung</Label>
            <Field $w={91} $ml={7}>100%<Spin><SpinUp /><SpinDown /></Spin></Field>
            <Label $ml={5}>Drehung</Label>
            <Field $w={92} $ml={13}>0,0 °<Spin><SpinUp /><SpinDown /></Spin></Field>
            <Slot $ml={7}><Check><Icon n="tick" s={12} /></Check></Slot>
            <Label $ml={4}>Zeichnen</Label>
            <Slot $ml={18}><Icon n="crs" s={14} /></Slot>
            <Label $ml={2}>EPSG:25833</Label>
            <Slot $ml={25}><Icon n="bubble" s={17} /></Slot>
          </StatusRight>
        </StatusBar>
      </Win>
    </Page>
  );
}
